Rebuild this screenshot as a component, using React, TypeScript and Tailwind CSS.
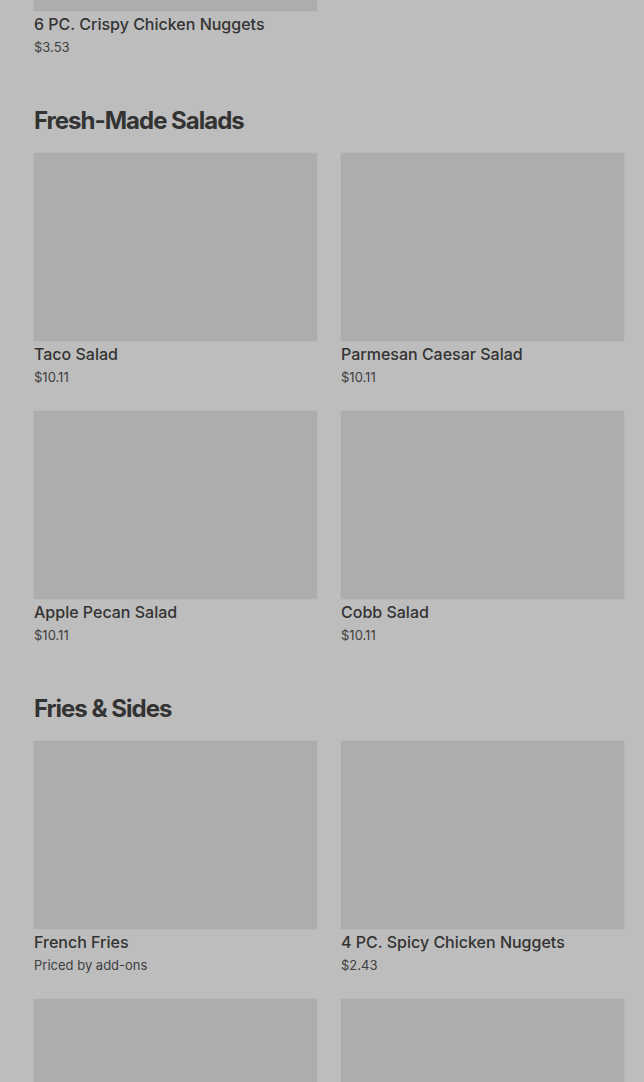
import React from 'react';

type Item = { name?: string; price?: string };
type Section = { title?: string; items: Item[] };

const sections: Section[] = [
    { items: [{ name: '6 PC. Crispy Chicken Nuggets', price: '$3.53' }] },
    {
        title: 'Fresh-Made Salads',
        items: [
            { name: 'Taco Salad', price: '$10.11' },
            { name: 'Parmesan Caesar Salad', price: '$10.11' },
            { name: 'Apple Pecan Salad', price: '$10.11' },
            { name: 'Cobb Salad', price: '$10.11' },
        ],
    },
    {
        title: 'Fries & Sides',
        // last row is only partly scrolled into view: images only
        items: [
            { name: 'French Fries', price: 'Priced by add-ons' },
            { name: '4 PC. Spicy Chicken Nuggets', price: '$2.43' },
            {},
            {},
        ],
    },
];

const MenuCard: React.FC<{ item: Item }> = ({ item }) => (
    <div className="flex flex-col">
        <div className="h-[188px] w-full bg-[#adadad] shadow-[0_0_0_1px_rgba(0,0,0,0.02)]" />
        {item.name && (
            <>
                <div className="mt-[1px] h-6 text-[16px] leading-6 font-medium text-[#333] truncate">{item.name}</div>
                <div className="mt-[1px] h-5 text-[13px] leading-5 text-[#404040]">{item.price}</div>
            </>
        )}
    </div>
);

export default function App() {
    return (
        <div className="h-[1082px] bg-[#bdbdbd] overflow-hidden" style={{ fontFamily: 'Inter, "Noto Sans", sans-serif' }}>
            <div className="-mt-[177px] pl-[34px] pr-[20px]">
                {sections.map((section, i) => (
                    <section key={i} className={i > 0 ? 'pt-[48px]' : ''}>
                        {section.title && (
                            <h2 className="mb-4 text-[24px] leading-8 font-bold tracking-[-1px] text-[#333]">
                                {section.title}
                            </h2>
                        )}
                        <div className="grid grid-cols-2 gap-x-6 gap-y-6">
                            {section.items.map((item, j) => (
                                <MenuCard key={j} item={item} />
                            ))}
                        </div>
                    </section>
                ))}
            </div>
        </div>
    );
}
